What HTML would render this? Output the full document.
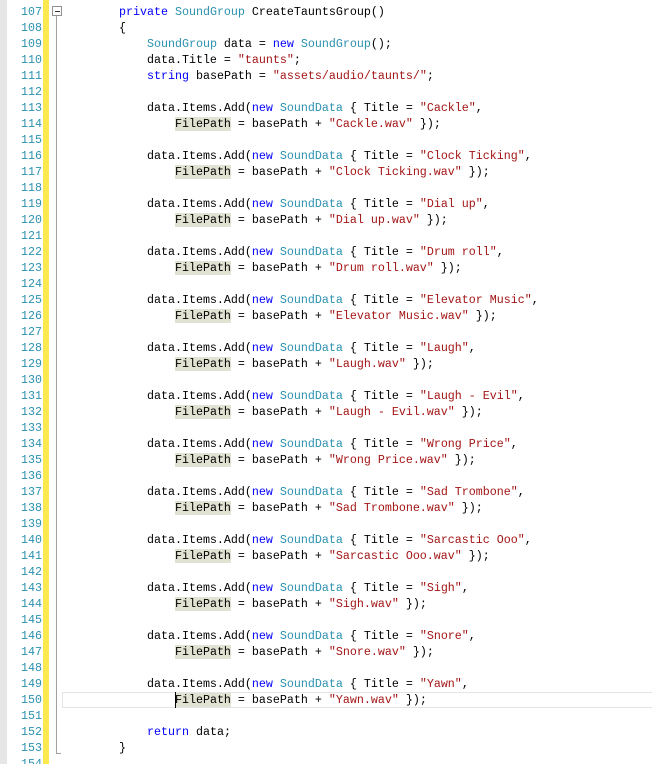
<!DOCTYPE html>
<html><head><meta charset="utf-8"><style>
html,body{margin:0;padding:0;background:#fff;width:652px;height:764px;overflow:hidden;position:relative}
#strip{position:absolute;left:0;top:0;width:7px;height:764px;background:#e6e6e6}
#yel{position:absolute;left:43px;top:0;width:6px;height:764px;background:#fce94f}
#fold{position:absolute;left:56px;top:16px;width:1px;height:738px;background:#a0a0a0}
#foldtick{position:absolute;left:56px;top:753px;width:5px;height:1px;background:#a0a0a0}
#box{position:absolute;left:52px;top:6px;width:8px;height:8px;border:1px solid #909090;background:#fff}
#box:after{content:"";position:absolute;left:2px;top:4px;width:5px;height:1px;background:#333}
#cur{position:absolute;left:62px;top:692px;width:600px;height:14px;border:1px solid #e4e4e4}
.ln{position:absolute;left:0;width:42px;text-align:right;color:#2b91af}
.c{position:absolute;left:119px;white-space:pre;color:#000}
.ln,.c{font-family:"Liberation Mono",monospace;font-size:11.67px;line-height:16px;height:16px}
.k{color:#0000ff}.t{color:#2b91af}.s{color:#a31515}.h{background:#e2e2d2}
#caret{position:absolute;left:175px;top:692px;width:1px;height:16px;background:#000}
</style></head><body>
<div id="strip"></div><div id="yel"></div><div id="fold"></div><div id="foldtick"></div><div id="box"></div><div id="cur"></div>
<div id="code"></div>
<script>
var L=[
'<span class="k">private</span> <span class="t">SoundGroup</span> CreateTauntsGroup()',
'{',
'    <span class="t">SoundGroup</span> data = <span class="k">new</span> <span class="t">SoundGroup</span>();',
'    data.Title = <span class="s">"taunts"</span>;',
'    <span class="k">string</span> basePath = <span class="s">"assets/audio/taunts/"</span>;',
''];
var items=[["Cackle","Cackle.wav"],["Clock Ticking","Clock Ticking.wav"],["Dial up","Dial up.wav"],["Drum roll","Drum roll.wav"],["Elevator Music","Elevator Music.wav"],["Laugh","Laugh.wav"],["Laugh - Evil","Laugh - Evil.wav"],["Wrong Price","Wrong Price.wav"],["Sad Trombone","Sad Trombone.wav"],["Sarcastic Ooo","Sarcastic Ooo.wav"],["Sigh","Sigh.wav"],["Snore","Snore.wav"],["Yawn","Yawn.wav"]];
items.forEach(function(it,i){
L.push('    data.Items.Add(<span class="k">new</span> <span class="t">SoundData</span> { Title = <span class="s">"'+it[0]+'"</span>,');
L.push('        <span class="h">FilePath</span> = basePath + <span class="s">"'+it[1]+'"</span> });');
L.push('');
});
L.push('    <span class="k">return</span> data;');
L.push('}');
L.push('');
var h='';
for(var i=0;i<L.length;i++){
var y=4+16*i;
h+='<div class="ln" style="top:'+y+'px">'+(107+i)+'</div><div class="c" style="top:'+y+'px">'+L[i]+'</div>';
}
h+='<div id="caret"></div>';
document.getElementById('code').innerHTML=h;
</script>
</body></html>
